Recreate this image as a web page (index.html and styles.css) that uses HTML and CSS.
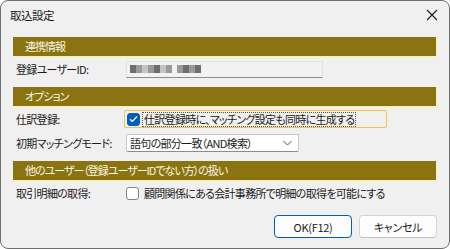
FILE: index.html
```html
<!DOCTYPE html>
<html lang="ja">
<head>
    <meta charset="UTF-8">
    <title>取込設定</title>
    <link rel="stylesheet" href="styles.css">
</head>
<body>
    <div class="dialog">
        <div class="titlebar">
            <span class="title">取込設定</span>
            <svg class="close" width="12" height="12" viewBox="0 0 12 12">
                <path d="M1 1 L11 11 M11 1 L1 11" stroke="#1a1a1a" stroke-width="1.1" fill="none"/>
            </svg>
        </div>

        <div class="section">連携情報</div>
        <div class="row">
            <span class="label">登録ユーザーID:</span>
            <div class="idbox">
                <span class="px d"></span><span class="px m"></span><span class="px l"></span><span class="px m"></span><span class="px d"></span><span class="px l"></span><span class="px m"></span><span class="px gap"></span><span class="px m"></span><span class="px d"></span><span class="px m"></span><span class="px d"></span>
            </div>
        </div>

        <div class="section">オプション</div>
        <div class="row">
            <span class="label">仕訳登録:</span>
            <label class="check focused">
                <span class="box checked">
                    <svg width="9" height="8" viewBox="0 0 9 8"><path d="M1 4.2 L3.4 6.5 L8 1.5" stroke="#fff" stroke-width="1.2" fill="none"/></svg>
                </span>
                <span class="check-text">仕訳登録時に、マッチング設定も同時に生成する</span>
            </label>
        </div>
        <div class="row">
            <span class="label">初期マッチングモード:</span>
            <div class="select">
                <span>語句の部分一致（AND検索）</span>
                <svg width="9" height="6" viewBox="0 0 9 6"><path d="M0.5 1 L4.5 5 L8.5 1" stroke="#555" stroke-width="1" fill="none"/></svg>
            </div>
        </div>

        <div class="section">他のユーザー（登録ユーザーIDでない方）の扱い</div>
        <div class="row">
            <span class="label">取引明細の取得:</span>
            <label class="check">
                <span class="box"></span>
                <span class="check-text plain">顧問関係にある会計事務所で明細の取得を可能にする</span>
            </label>
        </div>

        <div class="buttons">
            <button class="btn default">OK(F12)</button>
            <button class="btn">キャンセル</button>
        </div>
    </div>
</body>
</html>
```

FILE: styles.css
```css
body {
    margin: 0;
    background: #ffffff;
    font-family: "Noto Sans CJK JP", "Noto Sans", sans-serif;
    font-feature-settings: "palt";
    font-size: 11px;
    letter-spacing: -0.7px;
    color: #1a1a1a;
}
.dialog {
    width: 448px;
    height: 247px;
    background: #f0f0f0;
    border: 1px solid #6e6e6e;
    border-radius: 8px;
    display: flex;
    flex-direction: column;
    overflow: hidden;
}
.titlebar {
    height: 30px;
    display: flex;
    align-items: center;
    justify-content: space-between;
    padding: 0 11px 0 9px;
    flex-shrink: 0;
}
.title {
    font-size: 11.5px;
    letter-spacing: -0.5px;
    margin-top: -2px;
}
.close {
    margin-top: -2px;
}
.section {
    margin: 6px 12px 0 12px;
    height: 19px;
    line-height: 19px;
    padding-left: 12px;
    background: #8a7412;
    color: #fbf6e0;
    font-size: 11px;
    letter-spacing: -1px;
    border-right: 1px solid #fff0a0;
    border-bottom: 1px solid #fff0a0;
    flex-shrink: 0;
}
.row {
    display: flex;
    align-items: center;
    height: 24px;
    padding-left: 15px;
}
.label {
    width: 110px;
}
.idbox {
    width: 192px;
    height: 15px;
    background: #f2f2f2;
    border: 1px solid #e2e2e2;
    border-bottom: 1px solid #8c8c8c;
    display: flex;
    align-items: center;
    padding-left: 3px;
}
.px {
    width: 6px;
    height: 8px;
}
.px.d { background: #6e6e6e; }
.px.m { background: #9a9a9a; }
.px.l { background: #c4c4c4; }
.px.gap { width: 5px; background: transparent; }
.check {
    display: flex;
    align-items: center;
    gap: 2px;
}
.check.focused {
    margin-left: -2px;
    width: 259px;
    height: 16px;
    padding-left: 2px;
    border: 1px solid #f2c14e;
    border-radius: 2px;
    background: #f0f0f0;
}
.box {
    width: 11px;
    height: 11px;
    border: 1px solid #858585;
    border-radius: 3px;
    background: #ffffff;
    display: flex;
    align-items: center;
    justify-content: center;
}
.box.checked {
    background: #005fb8;
    border-color: #005fb8;
}
.check-text {
    border: 1px dotted #555;
    padding: 0 1px;
    line-height: 13px;
}
.check-text.plain {
    border-color: transparent;
    margin-left: 1px;
}
.select {
    width: 162px;
    height: 16px;
    background: #ffffff;
    border: 1px solid #c8c8c8;
    border-bottom-color: #8c8c8c;
    border-radius: 2px;
    display: flex;
    align-items: center;
    justify-content: space-between;
    padding: 0 6px 0 3px;
}
.buttons {
    display: flex;
    justify-content: flex-end;
    gap: 7px;
    margin-top: auto;
    padding: 0 12px 10px 0;
}
.btn {
    width: 78px;
    height: 23px;
    font-family: inherit;
    font-feature-settings: "palt";
    font-size: 11px;
    letter-spacing: -0.3px;
    color: #1a1a1a;
    background: #fdfdfd;
    border: 1px solid #d4d4d4;
    border-bottom-color: #c0c0c0;
    border-radius: 4px;
}
.btn.default {
    border: 1px solid #005fb8;
}
```
